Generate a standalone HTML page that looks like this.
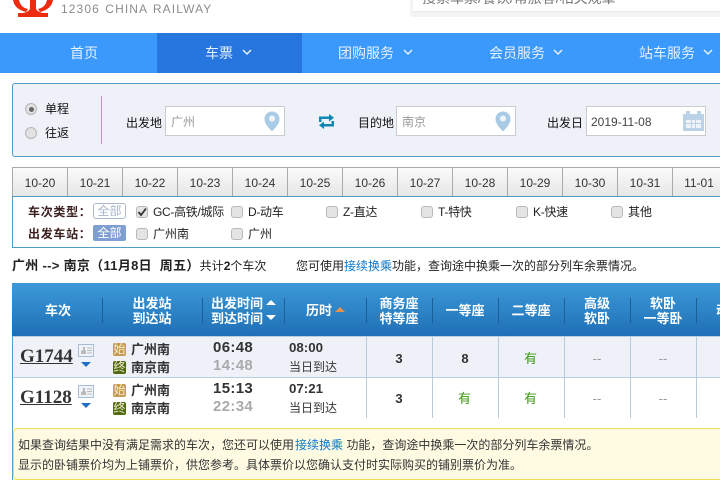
<!DOCTYPE html>
<html lang="zh"><head><meta charset="utf-8"><title>12306</title>
<style>
*{box-sizing:border-box}
html,body{margin:0;padding:0;background:#fff}
body{width:720px;height:480px;position:relative;overflow:hidden;font-family:"Liberation Sans","WenQuanYi Zen Hei","Noto Sans CJK SC",sans-serif;font-size:12px;color:#333}
.a{position:absolute;white-space:nowrap}
.c{text-align:center}
.nav{color:#e6f1ff;font-size:14px;top:45px;line-height:16px}
.lb{color:#111;font-size:13px;line-height:16px}
.inp{position:absolute;top:106px;width:120px;height:30px;background:#fff;border:1px solid #c9cbcf}
.tab{position:absolute;top:167px;width:56px;height:30px;background:linear-gradient(#fafafa,#e6e6e6);border:1px solid #aaa;border-bottom:none;text-align:center;line-height:30px;font-size:12px;color:#333}
.cb{position:absolute;width:12px;height:12px;background:#e4e4e4;border:1px solid #b9b9b9;border-radius:3px}
.f{font-size:12px;color:#222;line-height:14px}
.th{color:#fff;font-size:13px;font-weight:bold;line-height:15px;text-align:center}
.sep{position:absolute;top:298px;width:1px;height:25px;background:#1a5f99}
.vl{position:absolute;width:1px;background:#b7cbdb;top:336px;height:82px}
.tn{font-family:"Liberation Serif",serif;font-weight:bold;font-size:19px;color:#333;text-decoration:underline;line-height:20px}
.st{font-size:13px;font-weight:bold;color:#333;line-height:16px}
.bd{position:absolute;width:13px;height:13px;border-radius:2px;color:#f6ecd8;font-size:12px;line-height:13px;text-align:center}
.tm{font-family:"Liberation Sans",sans-serif;font-weight:bold;font-size:15px;letter-spacing:.35px;line-height:16px}
.n{font-size:13px;font-weight:bold;color:#333;line-height:16px;text-align:center;width:66px}
.g{color:#3a9a10;font-weight:normal}
.d{color:#999;font-weight:normal}
a{color:#0d77c9;text-decoration:none}
</style></head><body>

<!-- top header -->
<svg class="a" style="left:0;top:0" width="60" height="18" viewBox="0 0 60 18" fill="#ee2b0e">
<path d="M13 0C14 6 18 10 26 12L28 9C23 8 20 5 19 0Z"/>
<path d="M53 0C52 6 48 10 40 12L38 9C43 8 46 5 47 0Z"/>
<path d="M30 0H36V8C36 10 38 12 43 13H48V17H18V13H23C28 12 30 10 30 8Z"/>
</svg>
<div class="a" style="left:61px;top:2px;font-size:12px;line-height:14px;letter-spacing:1.100px;color:#8d8d8d;word-spacing:1px">12306 CHINA RAILWAY</div>
<div class="a" style="left:410px;top:0;width:310px;height:17px;background:#f4f4f4"></div>
<div class="a" style="left:413px;top:0;width:307px;height:12px;background:#fff;border-bottom:1px solid #e9e9e9;overflow:hidden"><span class="a" style="left:9px;top:-10px;font-size:14px;line-height:16px;color:#777">搜索车票/餐饮/常旅客/相关规章</span></div>

<!-- nav -->
<div class="a" style="left:0;top:33px;width:720px;height:40px;background:#3b99fc"></div>
<div class="a" style="left:157px;top:33px;width:145px;height:40px;background:#2776e0"></div>
<div class="a nav" style="left:70px">首页</div>
<div class="a nav" style="left:205px">车票</div>
<div class="a nav" style="left:338px">团购服务</div>
<div class="a nav" style="left:489px">会员服务</div>
<div class="a nav" style="left:639px">站车服务</div>
<svg class="a" style="left:0;top:33px" width="720" height="40" fill="none" stroke="#e6f1ff" stroke-width="1.500">
<path d="M243 17L247 21L251 17M404 17L408 21L412 17M554 17L558 21L562 17M704 17L708 21L712 17"/>
</svg>

<!-- search panel -->
<div class="a" style="left:12px;top:83px;width:740px;height:74px;background:#eef1f8;border:1px solid #4f9cc4;border-radius:3px"></div>
<div class="a" style="left:25px;top:103px;width:12px;height:12px;border-radius:50%;background:#e2e2e2;border:1px solid #b5b5b5"></div>
<div class="a" style="left:29px;top:107px;width:5px;height:5px;border-radius:50%;background:#666"></div>
<div class="a" style="left:25px;top:127px;width:12px;height:12px;border-radius:50%;background:#e2e2e2;border:1px solid #b5b5b5"></div>
<div class="a lb" style="left:45px;top:101px;font-size:12px">单程</div>
<div class="a lb" style="left:45px;top:125px;font-size:12px">往返</div>
<div class="a" style="left:101px;top:96px;width:1px;height:48px;background:#7ab4d2"></div>
<div class="a lb" style="left:126px;top:115px;font-size:12px">出发地</div>
<div class="inp" style="left:165px"></div>
<div class="a" style="left:171px;top:115px;font-size:12px;line-height:14px;color:#999">广州</div>
<svg class="a" style="left:264px;top:111px" width="16" height="21" viewBox="0 0 16 21"><path d="M8 .5C3.800 .5 .5 3.800 .5 8C.5 13 5 17 8 20.500C11 17 15.500 13 15.500 8C15.500 3.800 12.200 .5 8 .5Z" fill="#a9cbe5"/><circle cx="8" cy="7.500" r="3" fill="#f2f6fb"/></svg>
<svg class="a" style="left:318px;top:114px" width="17" height="16" viewBox="0 0 17 16" fill="#0f86b4"><path d="M1 8V2.500H11V0L16 3.750L11 7.500V5H3.500V8Z"/><path d="M16 7V12.500H6V15L1 11.250L6 7.500V10H13.500V7Z"/></svg>
<div class="a lb" style="left:358px;top:115px;font-size:12px">目的地</div>
<div class="inp" style="left:396px"></div>
<div class="a" style="left:402px;top:115px;font-size:12px;line-height:14px;color:#999">南京</div>
<svg class="a" style="left:495px;top:111px" width="16" height="21" viewBox="0 0 16 21"><path d="M8 .5C3.800 .5 .5 3.800 .5 8C.5 13 5 17 8 20.500C11 17 15.500 13 15.500 8C15.500 3.800 12.200 .5 8 .5Z" fill="#a9cbe5"/><circle cx="8" cy="7.500" r="3" fill="#f2f6fb"/></svg>
<div class="a lb" style="left:547px;top:115px;font-size:12px">出发日</div>
<div class="inp" style="left:586px"></div>
<div class="a" style="left:591px;top:115px;font-size:12px;line-height:15px;color:#444">2019-11-08</div>
<svg class="a" style="left:683px;top:111px" width="21" height="20" viewBox="0 0 21 20"><path d="M0 3H3V0H7V3H14V0H18V3H21V20H0Z" fill="#bcd3e7"/><path d="M3 9H8V12H3ZM9 9H12V12H9ZM13 9H18V12H13ZM3 13H8V17H3ZM9 13H12V17H9ZM13 13H18V17H13Z" fill="#eef3f9"/></svg>

<!-- date tabs -->
<div class="tab" style="left:12px">10-20</div>
<div class="tab" style="left:67px">10-21</div>
<div class="tab" style="left:122px">10-22</div>
<div class="tab" style="left:177px">10-23</div>
<div class="tab" style="left:232px">10-24</div>
<div class="tab" style="left:287px">10-25</div>
<div class="tab" style="left:342px">10-26</div>
<div class="tab" style="left:397px">10-27</div>
<div class="tab" style="left:452px">10-28</div>
<div class="tab" style="left:507px">10-29</div>
<div class="tab" style="left:562px">10-30</div>
<div class="tab" style="left:617px">10-31</div>
<div class="tab" style="left:672px;width:60px;padding-right:6px">11-01</div>

<!-- filter -->
<div class="a" style="left:12px;top:196px;width:740px;height:52px;border:1px solid #4f9cc4;background:#fff"></div>
<div class="a" style="left:28px;top:205px;font-size:12px;font-weight:bold;color:#3c1f1f;line-height:14px;letter-spacing:.7px">车次类型：</div>
<div class="a" style="left:28px;top:227px;font-size:12px;font-weight:bold;color:#3c1f1f;line-height:14px;letter-spacing:.7px">出发车站：</div>
<div class="a c" style="left:93px;top:203px;width:33px;height:16px;border:1px solid #aab6c9;border-radius:3px;color:#a9b5cb;font-size:12px;line-height:14px">全部</div>
<div class="a c" style="left:93px;top:225px;width:33px;height:16px;background:#7f9fd0;border-radius:2px;color:#fff;font-size:12px;line-height:16px">全部</div>
<div class="cb" style="left:136px;top:206px"></div>
<svg class="a" style="left:136px;top:206px" width="12" height="12"><path d="M2.500 6L5 9L10 2.500" fill="none" stroke="#333" stroke-width="1.800"/></svg>
<div class="a f" style="left:153px;top:205px;letter-spacing:-.3px">GC-高铁/城际</div>
<div class="cb" style="left:231px;top:206px"></div>
<div class="a f" style="left:248px;top:205px;letter-spacing:-.3px">D-动车</div>
<div class="cb" style="left:326px;top:206px"></div>
<div class="a f" style="left:343px;top:205px;letter-spacing:-.3px">Z-直达</div>
<div class="cb" style="left:421px;top:206px"></div>
<div class="a f" style="left:438px;top:205px;letter-spacing:-.3px">T-特快</div>
<div class="cb" style="left:516px;top:206px"></div>
<div class="a f" style="left:533px;top:205px;letter-spacing:-.3px">K-快速</div>
<div class="cb" style="left:611px;top:206px"></div>
<div class="a f" style="left:628px;top:205px">其他</div>
<div class="cb" style="left:136px;top:228px"></div>
<div class="a f" style="left:153px;top:227px">广州南</div>
<div class="cb" style="left:231px;top:228px"></div>
<div class="a f" style="left:248px;top:227px">广州</div>

<!-- summary -->
<div class="a" style="left:12px;top:259px;font-size:12px;line-height:14px;color:#222"><b style="font-size:13px;letter-spacing:.3px">广州 --&gt; 南京（11月8日&nbsp; 周五）</b>共计<b>2</b>个车次</div>
<div class="a" style="left:296px;top:259px;font-size:12px;line-height:14px;color:#222">您可使用<a>接续换乘</a>功能，查询途中换乘一次的部分列车余票情况。</div>

<!-- table header -->
<div class="a" style="left:12px;top:283px;width:740px;height:53px;background:linear-gradient(#3d9ad8,#1e6fb6)"></div>
<div class="sep" style="left:102px"></div><div class="sep" style="left:202px"></div><div class="sep" style="left:284px"></div><div class="sep" style="left:366px"></div><div class="sep" style="left:432px"></div><div class="sep" style="left:498px"></div><div class="sep" style="left:564px"></div><div class="sep" style="left:630px"></div><div class="sep" style="left:696px"></div>
<div class="a th" style="left:12px;width:92px;top:303px">车次</div>
<div class="a th" style="left:102px;width:100px;top:296px">出发站<br>到达站</div>
<div class="a th" style="left:211px;top:296px;text-align:left">出发时间<br>到达时间</div>
<svg class="a" style="left:265px;top:299px" width="12" height="26" fill="#fff"><path d="M1 6L6 1L11 6ZM1 16H11L6 21Z"/></svg>
<div class="a th" style="left:306px;top:303px">历时</div>
<svg class="a" style="left:334px;top:305px" width="12" height="8"><path d="M1 7L6 2L11 7Z" fill="#e8914b"/></svg>
<div class="a th" style="left:366px;width:66px;top:296px">商务座<br>特等座</div>
<div class="a th" style="left:432px;width:66px;top:303px">一等座</div>
<div class="a th" style="left:498px;width:66px;top:303px">二等座</div>
<div class="a th" style="left:564px;width:66px;top:296px">高级<br>软卧</div>
<div class="a th" style="left:630px;width:66px;top:296px">软卧<br>一等卧</div>
<div class="a th" style="left:696px;width:66px;top:296px;padding-top:7px">动卧</div>

<!-- rows -->
<div class="a" style="left:12px;top:336px;width:740px;height:42px;background:#eef1f8;border-bottom:1px solid #b7cfe0;border-top:1px solid #b7cfe0"></div>
<div class="a" style="left:12px;top:336px;width:1px;height:144px;background:#5aa0c8"></div>
<div class="vl" style="left:366px"></div><div class="vl" style="left:432px"></div><div class="vl" style="left:498px"></div><div class="vl" style="left:564px"></div><div class="vl" style="left:630px"></div><div class="vl" style="left:696px"></div>

<div class="a tn" style="left:20px;top:347px">G1744</div>
<svg class="a" style="left:78px;top:344px" width="16" height="13" viewBox="0 0 16 13"><rect x=".5" y=".5" width="15" height="12" fill="#f0f4fa" stroke="#a9bdd2"/><path d="M3 10V7L5 6V3H7V6L8 7V10Z" fill="#b9b9b9"/><path d="M9 4H14M9 6.500H14M9 9H14" stroke="#b9b9b9"/></svg>
<svg class="a" style="left:80px;top:361px" width="12" height="7"><path d="M1 1H11L6 6Z" fill="#1f6fc5"/></svg>
<div class="a bd" style="left:113px;top:343px;background:#c69a55">始</div>
<div class="a st" style="left:131px;top:342px">广州南</div>
<div class="a bd" style="left:113px;top:361px;background:#4f6b10">终</div>
<div class="a st" style="left:131px;top:360px">南京南</div>
<div class="a tm" style="left:213px;top:340px;color:#333">06:48</div>
<div class="a tm" style="left:213px;top:358px;color:#aaa">14:48</div>
<div class="a tm" style="left:289px;top:340px;font-size:13.300px;letter-spacing:0;color:#333">08:00</div>
<div class="a" style="left:289px;top:360px;font-size:12px;line-height:14px;color:#333">当日到达</div>
<div class="a n" style="left:366px;top:351px">3</div>
<div class="a n" style="left:432px;top:351px">8</div>
<div class="a n g" style="left:497.500px;top:351px">有</div>
<div class="a n d" style="left:564px;top:351px">--</div>
<div class="a n d" style="left:630px;top:351px">--</div>

<div class="a tn" style="left:20px;top:388px">G1128</div>
<svg class="a" style="left:78px;top:385px" width="16" height="13" viewBox="0 0 16 13"><rect x=".5" y=".5" width="15" height="12" fill="#f0f4fa" stroke="#a9bdd2"/><path d="M3 10V7L5 6V3H7V6L8 7V10Z" fill="#b9b9b9"/><path d="M9 4H14M9 6.500H14M9 9H14" stroke="#b9b9b9"/></svg>
<svg class="a" style="left:80px;top:402px" width="12" height="7"><path d="M1 1H11L6 6Z" fill="#1f6fc5"/></svg>
<div class="a bd" style="left:113px;top:384px;background:#c69a55">始</div>
<div class="a st" style="left:131px;top:383px">广州南</div>
<div class="a bd" style="left:113px;top:402px;background:#4f6b10">终</div>
<div class="a st" style="left:131px;top:401px">南京南</div>
<div class="a tm" style="left:213px;top:381px;color:#333">15:13</div>
<div class="a tm" style="left:213px;top:399px;color:#aaa">22:34</div>
<div class="a tm" style="left:289px;top:381px;font-size:13.300px;letter-spacing:0;color:#333">07:21</div>
<div class="a" style="left:289px;top:401px;font-size:12px;line-height:14px;color:#333">当日到达</div>
<div class="a n" style="left:366px;top:391px">3</div>
<div class="a n g" style="left:431.500px;top:391px">有</div>
<div class="a n g" style="left:497.500px;top:391px">有</div>
<div class="a n d" style="left:564px;top:391px">--</div>
<div class="a n d" style="left:630px;top:391px">--</div>

<!-- notice -->
<div class="a" style="left:13px;top:428px;width:740px;height:52px;background:#fffbe3;border:1px solid #f1dd55;border-radius:4px"></div>
<div class="a" style="left:18px;top:438px;font-size:12px;line-height:14px;color:#333">如果查询结果中没有满足需求的车次，您还可以使用<a style="margin-left:1px">接续换乘</a> 功能，查询途中换乘一次的部分列车余票情况。</div>
<div class="a" style="left:18px;top:458px;font-size:12px;line-height:14px;color:#333">显示的卧铺票价均为上铺票价，供您参考。具体票价以您确认支付时实际购买的铺别票价为准。</div>
</body></html>
